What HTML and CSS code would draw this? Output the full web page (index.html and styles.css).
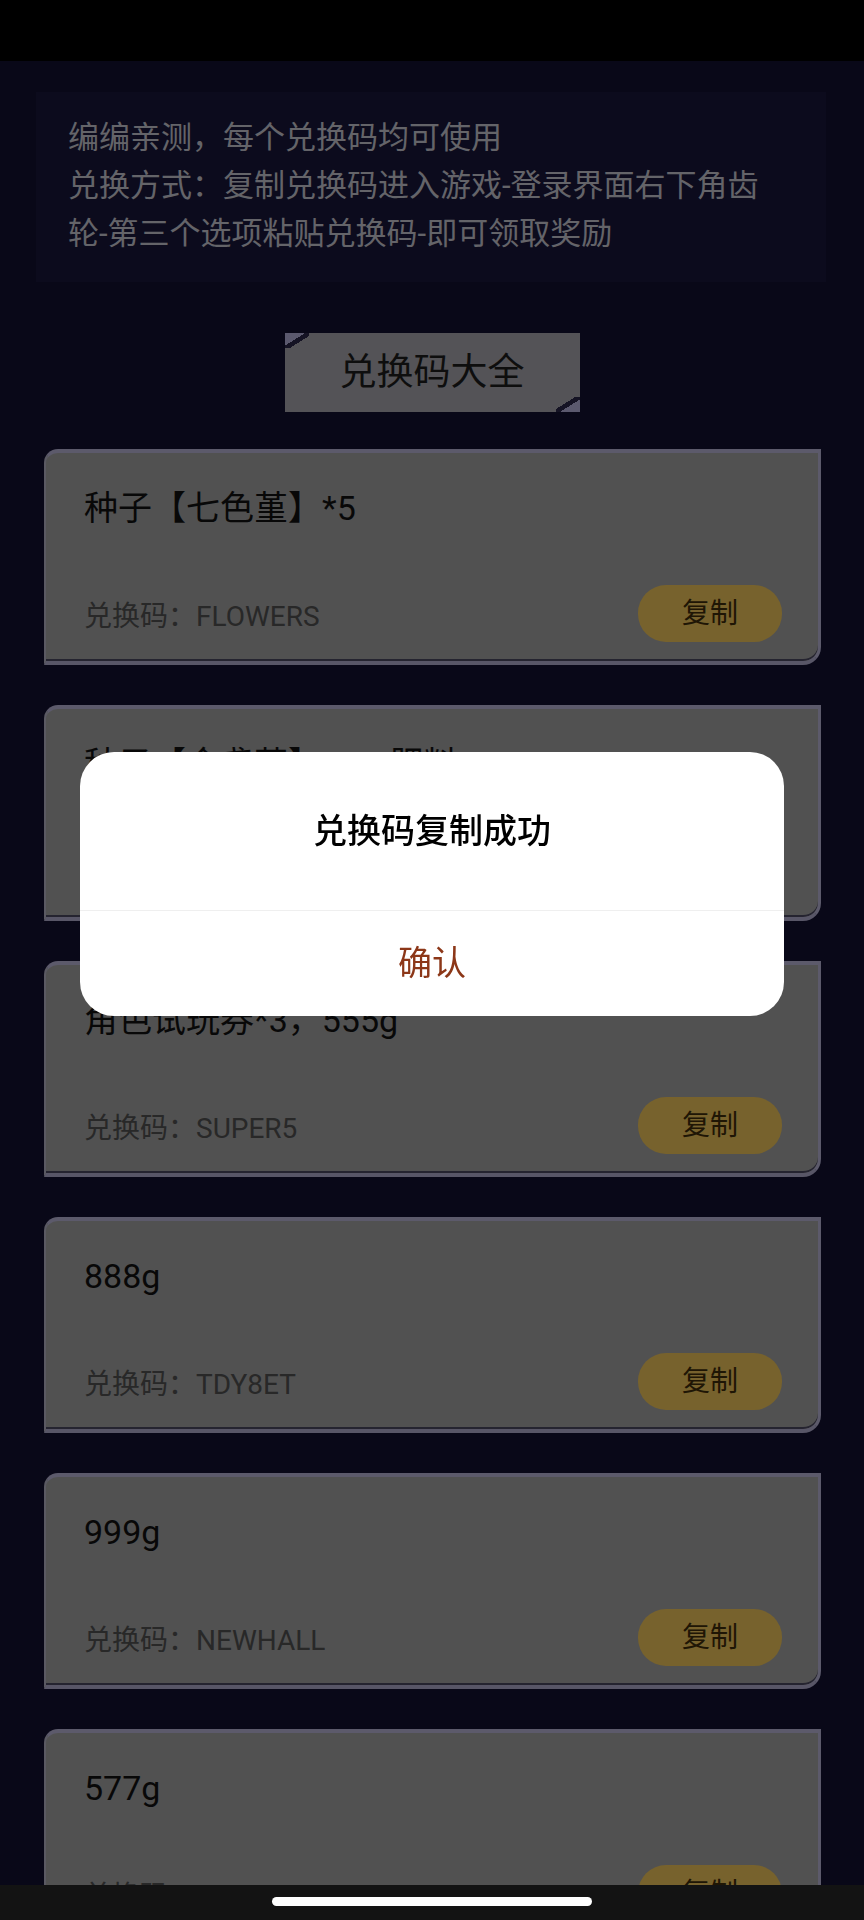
FILE: index.html
```html
<!DOCTYPE html>
<html>
<head>
    <title>兑换码大全</title>
    <link rel="stylesheet" href="styles.css">
</head>
<body>
    <div class="status-bar"></div>

    <div class="page">
        <div class="notice">
            <p>编编亲测，每个兑换码均可使用</p>
            <p>兑换方式：复制兑换码进入游戏-登录界面右下角齿轮-第三个选项粘贴兑换码-即可领取奖励</p>
        </div>

        <div class="section-title">兑换码大全</div>

        <div class="code-list">
            <div class="code-card">
                <div class="reward">种子【七色堇】*5</div>
                <div class="code-row">
                    <span class="code">兑换码：FLOWERS</span>
                    <span class="copy-btn">复制</span>
                </div>
            </div>
            <div class="code-card">
                <div class="reward">种子【金盏菊】*1，肥料*1，500g</div>
                <div class="code-row">
                    <span class="code">兑换码：GARDEN</span>
                    <span class="copy-btn">复制</span>
                </div>
            </div>
            <div class="code-card">
                <div class="reward">角色试玩券*3，555g</div>
                <div class="code-row">
                    <span class="code">兑换码：SUPER5</span>
                    <span class="copy-btn">复制</span>
                </div>
            </div>
            <div class="code-card">
                <div class="reward">888g</div>
                <div class="code-row">
                    <span class="code">兑换码：TDY8ET</span>
                    <span class="copy-btn">复制</span>
                </div>
            </div>
            <div class="code-card">
                <div class="reward">999g</div>
                <div class="code-row">
                    <span class="code">兑换码：NEWHALL</span>
                    <span class="copy-btn">复制</span>
                </div>
            </div>
            <div class="code-card">
                <div class="reward">577g</div>
                <div class="code-row">
                    <span class="code">兑换码：ORKYS</span>
                    <span class="copy-btn">复制</span>
                </div>
            </div>
        </div>
    </div>

    <div class="mask"></div>

    <div class="dialog">
        <div class="dialog-title">兑换码复制成功</div>
        <div class="dialog-btn">确认</div>
    </div>

    <div class="nav-bar">
        <div class="home-indicator"></div>
    </div>
</body>
</html>
```

FILE: styles.css
```css
/* page colours are the undimmed ones, the mask darkens them */
body {
    margin: 0;
    padding: 0;
    background-color: #121030;
    font-family: Roboto, "Noto Sans CJK SC", sans-serif;
}

.status-bar {
    height: 61px;
    background-color: #000;
}

.page {
    padding-bottom: 60px;
}

.notice {
    margin: 31px 38px 0 36px;
    padding: 22px 40px 24px 32px;
    background-color: #18163a;
    color: #c8c8d2;
    font-size: 31px;
    line-height: 48px;
}

.notice p {
    margin: 0;
}

.section-title {
    position: relative;
    width: 295px;
    height: 79px;
    margin: 51px auto 0;
    background-color: #a8a7ae;
    color: #1c1c1c;
    font-size: 37px;
    line-height: 79px;
    text-align: center;
}

.section-title::before,
.section-title::after {
    content: "";
    position: absolute;
    width: 24px;
    height: 15px;
}

.section-title::before {
    top: 0;
    left: 0;
    background: linear-gradient(to bottom right, #b6b2dc 0 42%, #2a2648 42% 60%, transparent 60%);
}

.section-title::after {
    right: 0;
    bottom: 0;
    background: linear-gradient(to top left, #b6b2dc 0 42%, #2a2648 42% 60%, transparent 60%);
}

.code-list {
    display: flex;
    flex-direction: column;
    gap: 40px;
    margin: 37px 43px 0 44px;
}

.code-card {
    box-sizing: border-box;
    height: 216px;
    padding: 31px 36px 19px 38px;
    background-color: #a2a2a2;
    border-top: 4px solid #b8b4d6;
    border-right: 3px solid #b8b4d6;
    border-bottom: 4px solid #b0acce;
    border-left: 2px solid #b4b2c4;
    border-radius: 14px 0 18px 0;
    box-shadow: inset 0 -2px 0 #4a4860;
}

.reward {
    height: 48px;
    color: #111;
    font-size: 34px;
    line-height: 48px;
    white-space: nowrap;
    overflow: hidden;
}

.code-row {
    display: flex;
    align-items: center;
    justify-content: space-between;
    margin-top: 53px;
    height: 57px;
}

.code {
    color: #505050;
    font-size: 28px;
}

.copy-btn {
    width: 144px;
    height: 57px;
    border-radius: 28px;
    background-color: #eec45a;
    color: #3e2c0a;
    font-size: 28px;
    line-height: 57px;
    text-align: center;
}

.mask {
    position: fixed;
    top: 0;
    left: 0;
    right: 0;
    bottom: 0;
    background-color: rgba(0, 0, 0, 0.5);
}

.dialog {
    position: fixed;
    top: 752px;
    left: 80px;
    width: 704px;
    background-color: #fff;
    border-radius: 34px;
    overflow: hidden;
}

.dialog-title {
    height: 158px;
    line-height: 158px;
    text-align: center;
    color: #000;
    font-size: 34px;
    font-weight: 500;
    border-bottom: 1px solid #efefef;
}

.dialog-btn {
    height: 105px;
    line-height: 105px;
    text-align: center;
    color: #8c3718;
    font-size: 34px;
}

.nav-bar {
    position: fixed;
    left: 0;
    right: 0;
    bottom: 0;
    height: 35px;
    background-color: #131313;
}

.home-indicator {
    width: 320px;
    height: 9px;
    margin: 12px auto 0;
    border-radius: 5px;
    background-color: #fff;
}
```
